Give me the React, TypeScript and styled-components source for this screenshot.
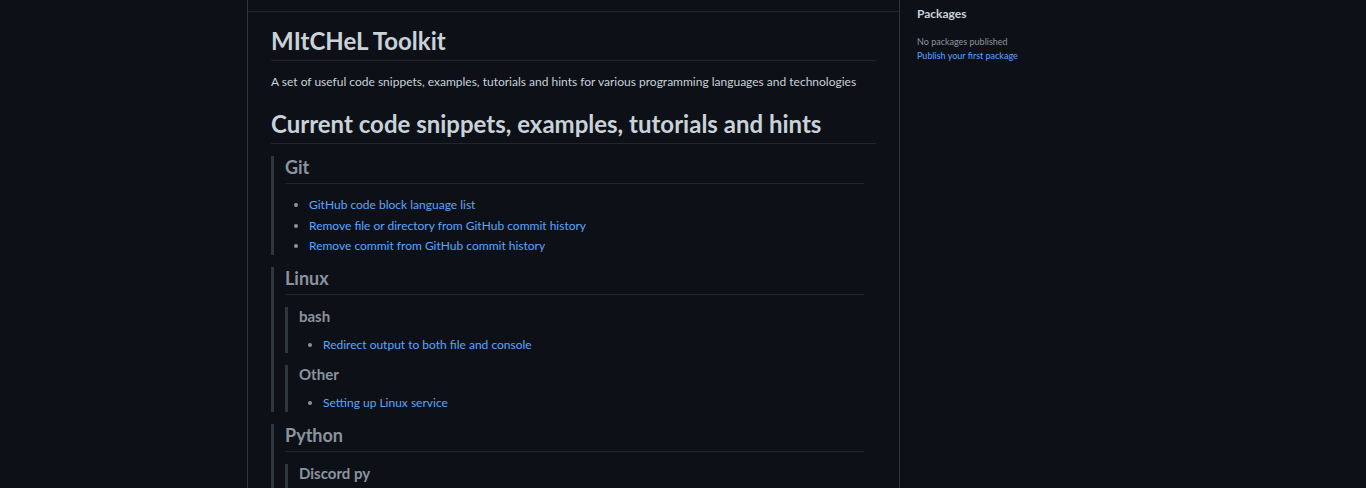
import React from "react";
import styled, { createGlobalStyle } from "styled-components";

const GlobalStyle = createGlobalStyle`
  html, body {
    margin: 0;
    padding: 0;
    background: #0d1117;
  }
  body {
    font-family: Lato, "Noto Sans", "Liberation Sans", sans-serif;
    color: #c9d1d9;
    overflow: hidden;
  }
`;

const Page = styled.div`
  display: flex;
  height: 488px;
  overflow: hidden;
`;

const Gutter = styled.div`
  width: 247px;
  flex: none;
`;

const ReadmeBox = styled.section`
  width: 653px;
  flex: none;
  box-sizing: border-box;
  border-left: 1px solid #30363d;
  border-right: 1px solid #30363d;
`;

const BoxHeader = styled.div`
  height: 11px;
  border-bottom: 1px solid #21262d;
`;

const Article = styled.article`
  padding: 14px 23px 0 23px;
  font-size: 12px;
  line-height: 1.5;
  color: #c9d1d9;
`;

const H1 = styled.h1`
  font-size: 24px;
  font-weight: 700;
  line-height: 30px;
  margin: 18px 0 12px;
  padding-bottom: 4px;
  border-bottom: 1px solid #21262d;
  &:first-child {
    margin-top: 0;
  }
`;

const H2 = styled.h2`
  font-size: 18px;
  font-weight: 700;
  line-height: 22px;
  margin: 18px 0 12px;
  padding-bottom: 5px;
  border-bottom: 1px solid #21262d;
`;

const H3 = styled.h3`
  font-size: 15px;
  font-weight: 700;
  line-height: 19px;
  margin: 18px 0 10px;
`;

const Para = styled.p`
  margin: 0 0 12px;
`;

const Quote = styled.blockquote<{ $continues?: boolean }>`
  margin: 0 0 12px;
  padding: 0 12px ${(p) => (p.$continues ? "40px" : "0")} 11px;
  border-left: 3px solid #30363d;
  color: #8b949e;
  & > :first-child {
    margin-top: 0;
  }
  & > :last-child {
    margin-bottom: 0;
  }
`;

const List = styled.ul`
  margin: 0 0 12px;
  padding-left: 24px;
  list-style: disc;
`;

const Item = styled.li`
  line-height: 17.5px;
  & + & {
    margin-top: 3px;
  }
  &::marker {
    color: #8b949e;
  }
`;

const Link = styled.a`
  color: #58a6ff;
  text-decoration: none;
`;

const Sidebar = styled.aside`
  padding: 6px 0 0 17px;
  font-size: 9px;
  line-height: 1.5;
`;

const SideTitle = styled.h2`
  margin: 0 0 13px;
  font-size: 12px;
  font-weight: 700;
  line-height: 16px;
  color: #c9d1d9;
`;

const Muted = styled.div`
  color: #8b949e;
`;

const SmallLink = styled.a`
  display: block;
  color: #58a6ff;
  text-decoration: none;
`;

const links = (items: string[]) => (
  <List>
    {items.map((t) => (
      <Item key={t}>
        <Link href="#">{t}</Link>
      </Item>
    ))}
  </List>
);

export default function App() {
  return (
    <>
      <GlobalStyle />
      <Page>
        <Gutter />
        <ReadmeBox>
          <BoxHeader />
          <Article>
            <H1>MItCHeL Toolkit</H1>
            <Para>
              A set of useful code snippets, examples, tutorials and hints for various
              programming languages and technologies
            </Para>
            <H1>Current code snippets, examples, tutorials and hints</H1>
            <Quote>
              <H2>Git</H2>
              {links([
                "GitHub code block language list",
                "Remove file or directory from GitHub commit history",
                "Remove commit from GitHub commit history",
              ])}
            </Quote>
            <Quote>
              <H2>Linux</H2>
              <Quote>
                <H3>bash</H3>
                {links(["Redirect output to both file and console"])}
              </Quote>
              <Quote>
                <H3>Other</H3>
                {links(["Setting up Linux service"])}
              </Quote>
            </Quote>
            <Quote>
              <H2>Python</H2>
              <Quote $continues>
                <H3>Discord py</H3>
              </Quote>
            </Quote>
          </Article>
        </ReadmeBox>
        <Sidebar>
          <SideTitle>Packages</SideTitle>
          <Muted>No packages published</Muted>
          <SmallLink href="#">Publish your first package</SmallLink>
        </Sidebar>
      </Page>
    </>
  );
}
